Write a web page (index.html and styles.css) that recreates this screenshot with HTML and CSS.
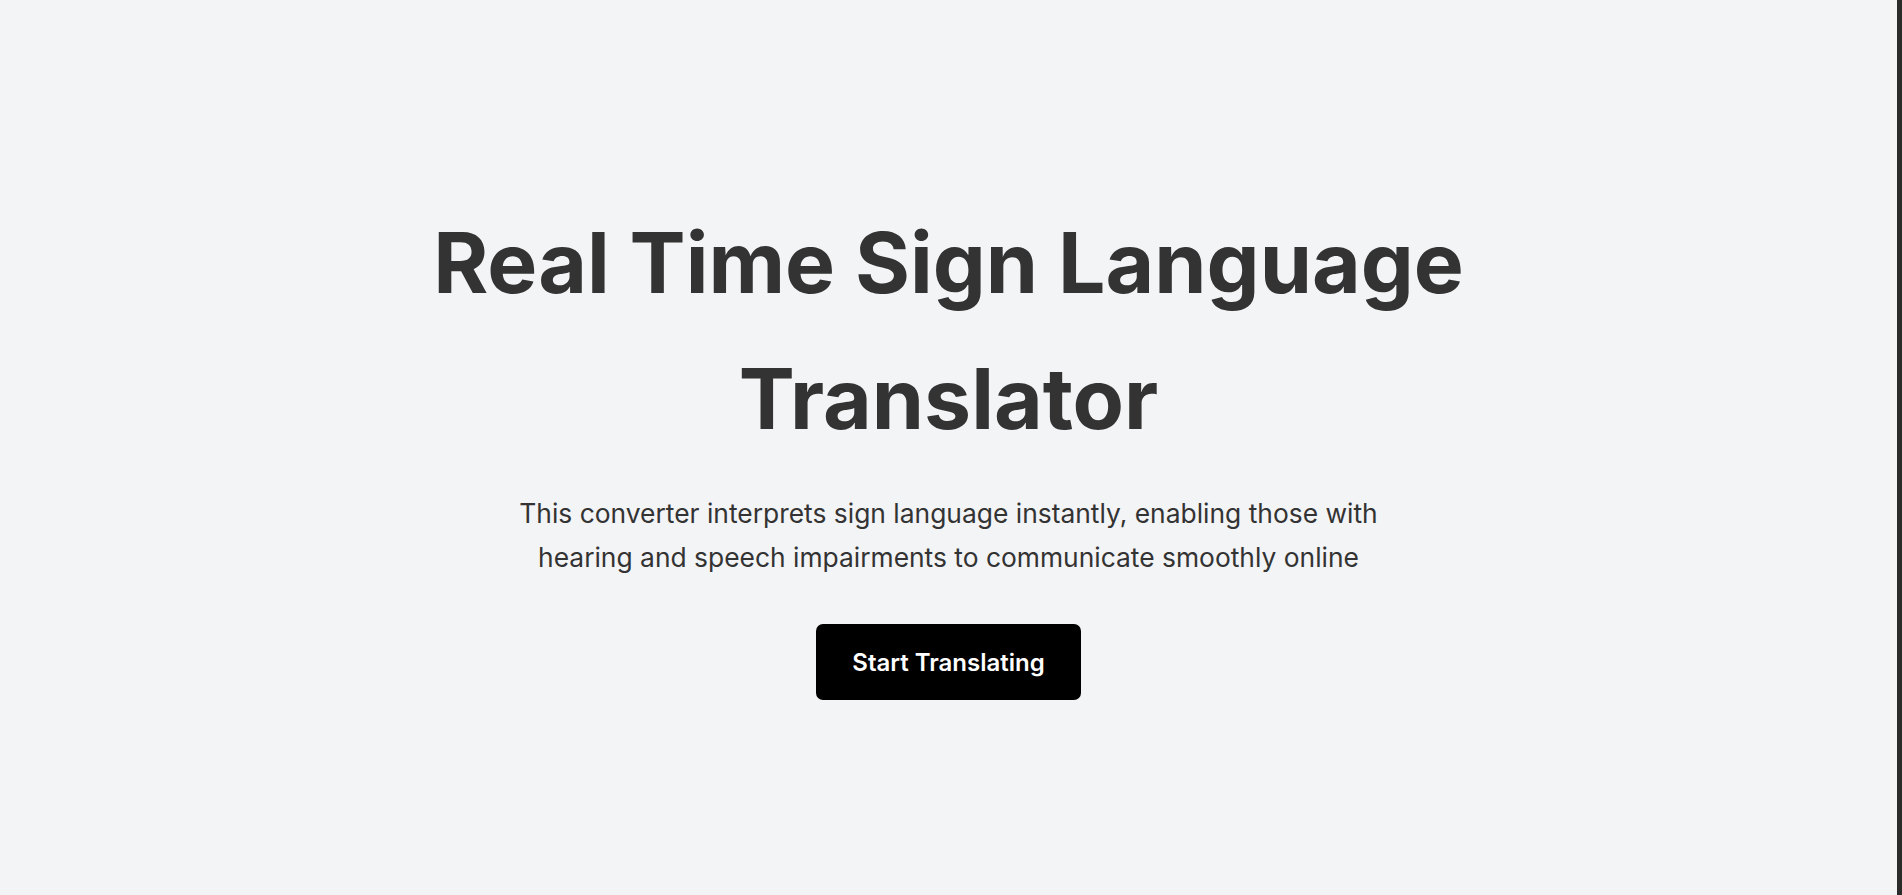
FILE: index.html
```html
<!DOCTYPE html>
<html lang="en">
<head>
<meta charset="utf-8">
<title>Real Time Sign Language Translator</title>
<link rel="stylesheet" href="styles.css">
</head>
<body>
<div class="page">
  <main class="hero">
    <h1 class="hero-title">Real Time Sign Language<br>Translator</h1>
    <p class="hero-text">This converter interprets sign language instantly, enabling those with<br>hearing and speech impairments to communicate smoothly online</p>
    <button class="hero-btn" type="button">Start Translating</button>
  </main>
  <div class="edge"></div>
</div>
</body>
</html>
```

FILE: styles.css
```css
html, body {
  margin: 0;
  padding: 0;
}
body {
  background: #f3f4f6;
  font-family: Inter, "Noto Sans", sans-serif;
  color: #333333;
}
.page {
  display: flex;
  height: 895px;
  overflow: hidden;
}
.hero {
  flex: 1;
  display: flex;
  flex-direction: column;
  align-items: center;
  justify-content: center;
  text-align: center;
}
.edge {
  width: 5px;
  background: #2b2b2b;
}
.hero-title {
  margin: 0;
  font-size: 84px;
  line-height: 136px;
  font-weight: 700;
  letter-spacing: 0;
  color: #333333;
}
.hero-text {
  margin: 24px 0 0;
  font-size: 26.4px;
  line-height: 44px;
  font-weight: 400;
  color: #333333;
}
.hero-btn {
  margin-top: 45px;
  width: 265px;
  height: 76px;
  border: none;
  border-radius: 7px;
  background: #000000;
  color: #ffffff;
  font-family: Inter, "Noto Sans", sans-serif;
  font-size: 24px;
  font-weight: 600;
  cursor: pointer;
}
```
